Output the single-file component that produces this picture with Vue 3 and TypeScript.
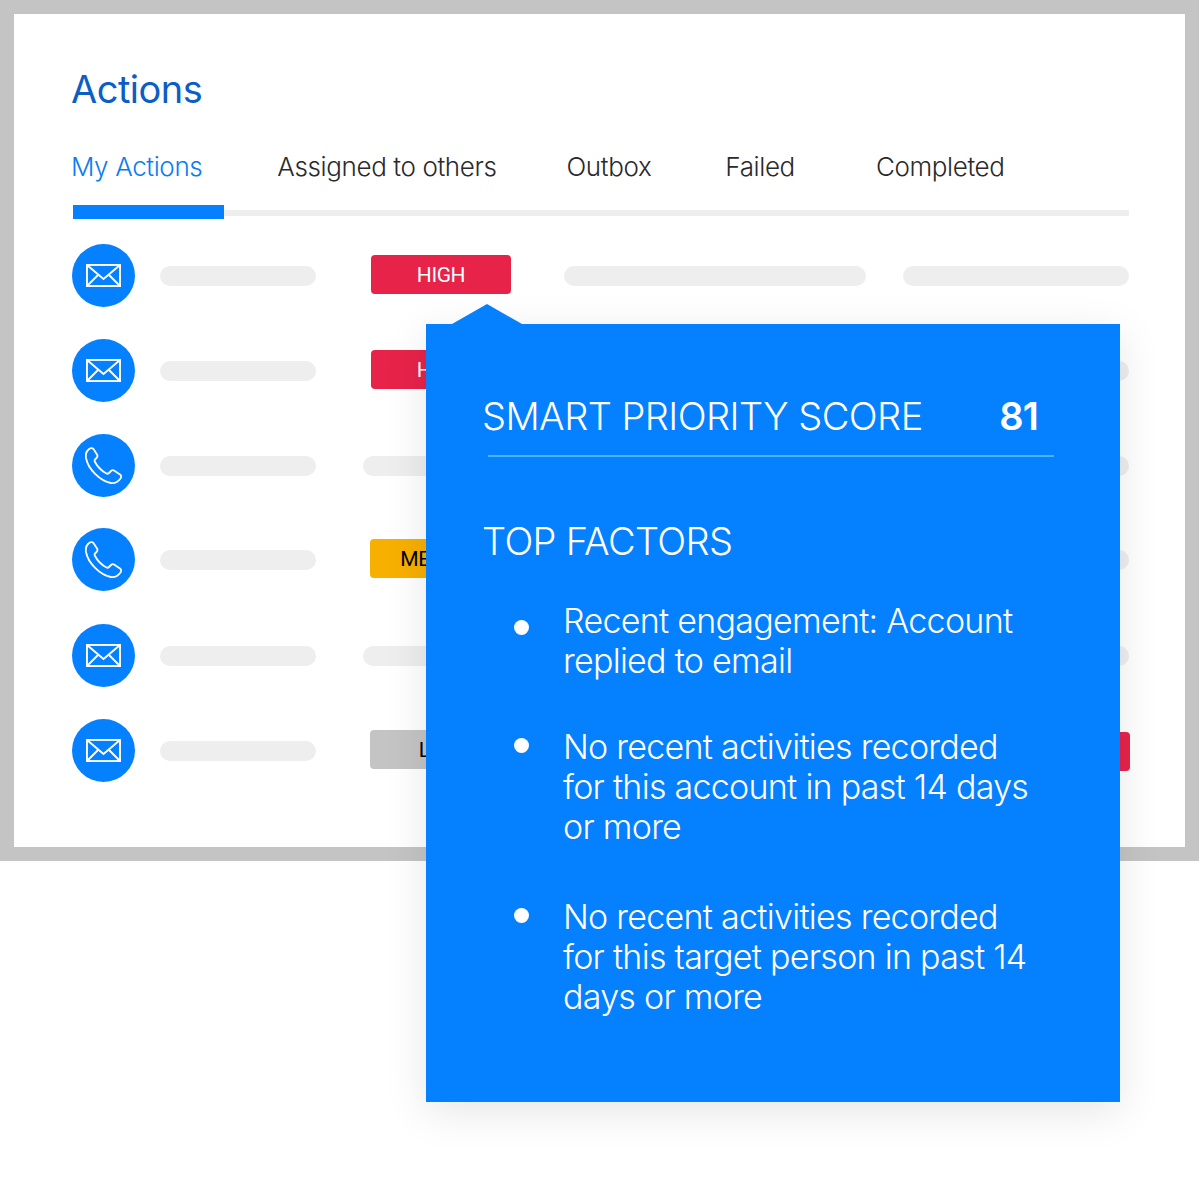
<script setup lang="ts">
type Row = { icon: 'mail' | 'phone'; kind: 'bar' | 'badge'; label?: string; tone?: string; last?: 'bar' | 'badge' }
const rows: Row[] = [
  { icon: 'mail', kind: 'badge', label: 'HIGH', tone: 'red', last: 'bar' },
  { icon: 'mail', kind: 'badge', label: 'HIGH', tone: 'red', last: 'bar' },
  { icon: 'phone', kind: 'bar', last: 'bar' },
  { icon: 'phone', kind: 'badge', label: 'MEDIUM', tone: 'amber', last: 'bar' },
  { icon: 'mail', kind: 'bar', last: 'bar' },
  { icon: 'mail', kind: 'badge', label: 'LOW', tone: 'grey', last: 'badge' },
]
const tabs = ['My Actions', 'Assigned to others', 'Outbox', 'Failed', 'Completed']
const factors = [
  ['Recent engagement: Account', 'replied to email'],
  ['No recent activities recorded', 'for this account in past 14 days', 'or more'],
  ['No recent activities recorded', 'for this target person in past 14', 'days or more'],
]
</script>

<template>
  <div class="page">
    <section class="frame">
      <h1 class="title">Actions</h1>
      <nav class="tabs">
        <span v-for="(t, i) in tabs" :key="t" class="tab" :class="{ active: i === 0 }">{{ t }}</span>
      </nav>
      <div class="track"><div class="thumb"></div></div>
      <div class="rows">
        <div v-for="(r, i) in rows" :key="i" class="row">
          <span class="circle">
            <svg v-if="r.icon === 'mail'" class="mail" viewBox="0 0 35 23" fill="none" stroke="#fff" stroke-width="1.9">
              <rect x="0.95" y="0.95" width="33.1" height="21.1" />
              <path d="M1 1L17.5 15L34 1M1 22L12.5 10.5M34 22L22.5 10.5" />
            </svg>
            <svg v-else class="phone" viewBox="0 0 37 37" fill="none" stroke="#fff" stroke-width="1.8">
              <path d="M3 3C5 1 7 .5 8.5 2L12 7.5C13 9 12.5 10 11.5 11L10 12.5C9.5 13 9.5 14 10 15C12 19 17 24.5 21.5 26.5C22.5 27 23.5 26.5 24 26L26 24C27 23 28 23 29 23.5L35 27.5C36.5 28.5 36.5 30 35.5 31.5C33 35 30 36.5 26 36C15 34 3 22 1 11C.5 7.5 1 5 3 3Z" />
            </svg>
          </span>
          <span class="bar name"></span>
          <span v-if="r.kind === 'badge'" class="badge" :class="r.tone">{{ r.label }}</span>
          <span v-else class="bar mid"></span>
          <span class="bar wide"></span>
          <span v-if="r.last === 'bar'" class="bar end"></span>
          <span v-else class="badge red tail">HIGH</span>
        </div>
      </div>
    </section>

    <aside class="pop">
      <div class="score">
        <span>SMART PRIORITY SCORE</span>
        <strong>81</strong>
      </div>
      <div class="rule"></div>
      <h2 class="factors">TOP FACTORS</h2>
      <ul class="list">
        <li v-for="(f, i) in factors" :key="i" class="item">
          <span class="dot"></span>
          <p class="copy"><span v-for="l in f" :key="l" class="line">{{ l }}</span></p>
        </li>
      </ul>
    </aside>
  </div>
</template>

<style>
body { background: #fff; }
</style>

<style scoped>
.page {
  position: relative;
  width: 1200px;
  height: 1200px;
  background: #fff;
  font-family: Inter, "Liberation Sans", sans-serif;
  overflow: hidden;
}
.frame {
  box-sizing: border-box;
  width: 1199px;
  height: 861px;
  border: 14px solid #c4c4c4;
  background: #fff;
  padding: 52px 56px 0 58px;
}
.title {
  margin: 0 0 0 -1px;
  font-size: 38px;
  line-height: 46px;
  font-weight: 400;
  color: #0b5ec4;
  letter-spacing: -0.5px;
}
.tabs {
  display: flex;
  margin: 40px 0 0 -1px;
  height: 30px;
}
.tab {
  font-size: 26px;
  line-height: 30px;
  font-weight: 300;
  color: #2a2a2a;
  white-space: nowrap;
  letter-spacing: -0.38px;
}
.tab.active { color: #0a7cf2; }
.tab:nth-child(2) { margin-left: 75px; }
.tab:nth-child(3) { margin-left: 70px; }
.tab:nth-child(4) { margin-left: 74px; }
.tab:nth-child(5) { margin-left: 81px; }
.track {
  position: relative;
  margin: 28px 0 0 1px;
  height: 6px;
  background: #eee;
}
.thumb {
  position: absolute;
  left: 0;
  top: -5px;
  width: 151px;
  height: 14px;
  background: #0580fe;
}
.rows { margin-top: 12px; }
.row {
  display: grid;
  grid-template-columns: 88px 211px 193px 339px 226px;
  align-items: center;
  height: 95px;
}
.row:nth-child(3) { margin-bottom: -1px; }
.row:nth-child(4) { margin-bottom: 1px; }
.circle {
  width: 63px;
  height: 63px;
  border-radius: 50%;
  background: #0580fe;
  display: flex;
  align-items: center;
  justify-content: center;
}
.mail { width: 35px; height: 23px; }
.phone { width: 37px; height: 37px; }
.bar {
  display: block;
  height: 20px;
  border-radius: 10px;
  background: #eee;
}
.name { width: 156px; }
.mid { width: 300px; margin-left: -8px; }
.wide { width: 302px; }
.end { width: 226px; }
.badge {
  box-sizing: border-box;
  width: 140px;
  height: 39px;
  border-radius: 4px;
  display: flex;
  align-items: center;
  justify-content: center;
  font-family: Roboto, "Liberation Sans", sans-serif;
  font-size: 21px;
  letter-spacing: -0.4px;
  transform: translateY(-1px);
}
.red { background: #e8234a; color: #fff; }
.amber { background: #f7b000; color: #000; margin-left: -1px; }
.grey { background: #c4c4c4; color: #000; margin-left: -1px; }
.tail { justify-self: end; margin-right: -1px; transform: translateY(1px); }
.pop {
  position: absolute;
  left: 426px;
  top: 324px;
  box-sizing: border-box;
  width: 694px;
  height: 778px;
  padding: 67px 66px 0 56px;
  background: #0580fe;
  color: #fff;
  box-shadow: 0 10px 40px rgba(0, 0, 0, 0.1);
}
.pop::before {
  content: "";
  position: absolute;
  left: 26px;
  top: -20px;
  width: 70px;
  height: 20px;
  background: #0580fe;
  clip-path: polygon(0 100%, 50% 0, 100% 100%);
}
.score {
  display: flex;
  justify-content: space-between;
  font-size: 38px;
  line-height: 50px;
  font-weight: 300;
  letter-spacing: -0.55px;
  padding-right: 16px;
}
.score strong { font-weight: 600; letter-spacing: -0.8px; }
.rule {
  margin: 14px 0 0 6px;
  height: 2px;
  background: #4db5ff;
}
.factors {
  margin: 59px 0 0;
  font-size: 38px;
  line-height: 50px;
  font-weight: 300;
  letter-spacing: -0.65px;
}
.list {
  list-style: none;
  margin: 35px 0 0;
  padding: 0 0 0 31px;
}
.item {
  display: flex;
  margin-bottom: 50px;
}
.item:first-child .dot { margin-top: 19px; }
.dot {
  flex: none;
  width: 15px;
  height: 15px;
  margin: 11px 34px 0 1px;
  border-radius: 50%;
  background: #fff;
}
.item:first-child { margin-bottom: 46px; }
.copy {
  margin: 0;
  font-size: 34px;
  line-height: 40px;
  font-weight: 300;
  letter-spacing: -0.72px;
}
.line { display: block; white-space: nowrap; }
</style>
